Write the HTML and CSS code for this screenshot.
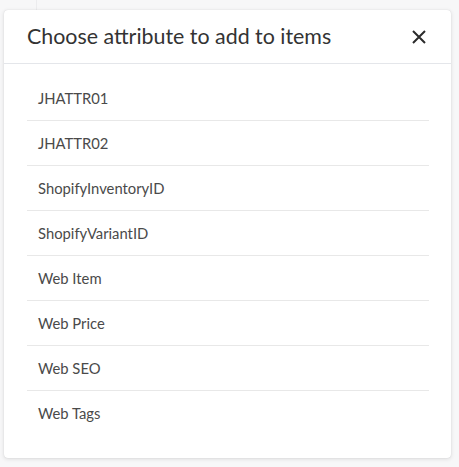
FILE: index.html
```html
<!DOCTYPE html>
<html>
<head>
<meta charset="utf-8">
<link rel="stylesheet" href="styles.css">
</head>
<body>
<div class="backdrop">
  <div class="bg-line"></div>
  <div class="modal">
    <div class="modal-header">
      <h2 class="modal-title">Choose attribute to add to items</h2>
      <button class="close-btn" aria-label="Close">
        <svg width="16" height="16" viewBox="0 0 16 16"><path d="M2 2L14 14M14 2L2 14" stroke="#2b2b2b" stroke-width="2" stroke-linecap="butt" fill="none"/></svg>
      </button>
    </div>
    <ul class="attr-list">
      <li class="attr-item">JHATTR01</li>
      <li class="attr-item">JHATTR02</li>
      <li class="attr-item">ShopifyInventoryID</li>
      <li class="attr-item">ShopifyVariantID</li>
      <li class="attr-item">Web Item</li>
      <li class="attr-item">Web Price</li>
      <li class="attr-item">Web SEO</li>
      <li class="attr-item">Web Tags</li>
    </ul>
  </div>
</div>
</body>
</html>
```
FILE: styles.css
```css
html, body {
  margin: 0;
  padding: 0;
}
body {
  background: #f7f7f8;
  font-family: "Lato", "Open Sans", sans-serif;
  width: 459px;
  height: 467px;
  overflow: hidden;
}
.backdrop {
  position: relative;
  padding: 10px 8px 9px 4px;
}
.bg-line {
  position: absolute;
  left: 36px;
  top: 0;
  width: 1px;
  height: 10px;
  background: #ececee;
}
.modal {
  position: relative;
  width: 447px;
  height: 448px;
  background: #fff;
  border-radius: 4px;
  box-shadow: 0 1px 4px rgba(0,0,0,0.12), 0 0 1px rgba(0,0,0,0.15);
  box-sizing: border-box;
}
.modal-header {
  display: flex;
  align-items: center;
  justify-content: space-between;
  height: 54px;
  box-sizing: border-box;
  padding: 0 22px 0 23px;
  border-bottom: 1px solid #e4e6ea;
}
.modal-title {
  margin: 0;
  font-size: 21.4px;
  font-weight: 400;
  color: #333;
  line-height: 1;
}
.close-btn {
  border: 0;
  background: none;
  padding: 0;
  width: 16px;
  height: 16px;
  display: flex;
  align-items: center;
  justify-content: center;
  margin-right: 2px;
}
.attr-list {
  list-style: none;
  margin: 0;
  padding: 12px 22px 0 23px;
}
.attr-item {
  height: 45px;
  box-sizing: border-box;
  display: flex;
  align-items: center;
  padding-left: 11px;
  font-size: 14.8px;
  color: #4a4a4a;
  border-bottom: 1px solid #e8e8e8;
}
.attr-item:last-child {
  border-bottom: 0;
  height: 44px;
}
```
